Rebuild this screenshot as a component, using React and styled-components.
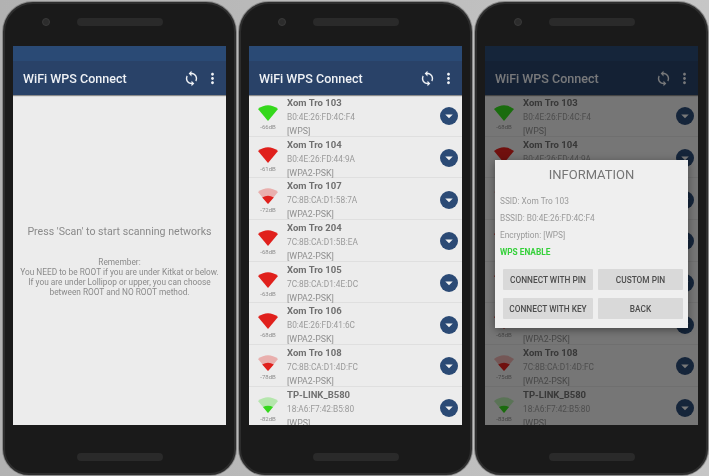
import React from "react";
import styled, { createGlobalStyle } from "styled-components";
import { MdSync, MdMoreVert, MdArrowDropDown } from "react-icons/md";

const networks = [
  { name: "Xom Tro 103", mac: "B0:4E:26:FD:4C:F4", type: "[WPS]", db: "-66dB", dim: "-68dB", color: "#35d81c", level: 4 },
  { name: "Xom Tro 104", mac: "B0:4E:26:FD:44:9A", type: "[WPA2-PSK]", db: "-61dB", dim: "-61dB", color: "#e0201c", level: 4 },
  { name: "Xom Tro 107", mac: "7C:8B:CA:D1:58:7A", type: "[WPA2-PSK]", db: "-72dB", dim: "-72dB", color: "#e0201c", level: 2 },
  { name: "Xom Tro 204", mac: "7C:8B:CA:D1:5B:EA", type: "[WPA2-PSK]", db: "-68dB", dim: "-68dB", color: "#e0201c", level: 4 },
  { name: "Xom Tro 105", mac: "7C:8B:CA:D1:4E:DC", type: "[WPA2-PSK]", db: "-63dB", dim: "-63dB", color: "#e0201c", level: 4 },
  { name: "Xom Tro 106", mac: "B0:4E:26:FD:41:6C", type: "[WPA2-PSK]", db: "-68dB", dim: "-68dB", color: "#e0201c", level: 4 },
  { name: "Xom Tro 108", mac: "7C:8B:CA:D1:4D:FC", type: "[WPA2-PSK]", db: "-78dB", dim: "-75dB", color: "#e0201c", level: 2 },
  { name: "TP-LINK_B580", mac: "18:A6:F7:42:B5:80", type: "[WPS]", db: "-82dB", dim: "-83dB", color: "#35d81c", level: 1 },
];

const Signal = ({ color, level }) => (
  <svg width="20" height="17" viewBox="0 0 20 17">
    {level < 4 && <path d="M0 5 Q10 -2.5 20 5 L10 17 Z" fill={color} opacity="0.3" />}
    {level === 4 && <path d="M0 5 Q10 -2.5 20 5 L10 17 Z" fill={color} />}
    {level === 2 && <path d="M4.2 10.5 Q10 7 15.8 10.5 L10 17 Z" fill={color} />}
    {level === 1 && <path d="M5 11 Q10 8.5 15 11 L10 17 Z" fill={color} />}
  </svg>
);

const Toolbar = () => (
  <Header>
    <StatusBar />
    <ActionBar>
      <AppTitle>WiFi WPS Connect</AppTitle>
      <MdSync size={17} />
      <MdMoreVert size={17} />
    </ActionBar>
  </Header>
);

const NetworkList = ({ dimmed }) => (
  <List>
    {networks.map((n) => (
      <Row key={n.name}>
        <SignalCell>
          <Signal color={n.color} level={n.level} />
          <Db>{dimmed ? n.dim : n.db}</Db>
        </SignalCell>
        <Info>
          <Name>{n.name}</Name>
          <Mac>{n.mac}</Mac>
          <Security>{n.type}</Security>
        </Info>
        <Expand>
          <MdArrowDropDown size={18} />
        </Expand>
      </Row>
    ))}
  </List>
);

const Phone = ({ children }) => (
  <Body>
    <TopBezel>
      <Camera />
      <Speaker />
    </TopBezel>
    <Screen>{children}</Screen>
    <BottomBezel>
      <Speaker />
    </BottomBezel>
  </Body>
);

const App = () => (
  <Page>
    <GlobalStyle />
    <Phone>
      <Toolbar />
      <Empty>
        <Hint>Press 'Scan' to start scanning networks</Hint>
        <Remember>
          Remember:
          <br />
          You NEED to be ROOT if you are under Kitkat or below.
          <br />
          If you are under Lollipop or upper, you can choose
          <br />
          between ROOT and NO ROOT method.
        </Remember>
      </Empty>
    </Phone>
    <Phone>
      <Toolbar />
      <NetworkList />
    </Phone>
    <Phone>
      <Toolbar />
      <NetworkList dimmed />
      <Overlay>
        <Dialog>
          <DialogTitle>INFORMATION</DialogTitle>
          <DialogLine>SSID: Xom Tro 103</DialogLine>
          <DialogLine>BSSID: B0:4E:26:FD:4C:F4</DialogLine>
          <DialogLine>Encryption: [WPS]</DialogLine>
          <DialogLine $ok>WPS ENABLE</DialogLine>
          <Buttons>
            <DialogButton>CONNECT WITH PIN</DialogButton>
            <DialogButton>CUSTOM PIN</DialogButton>
            <DialogButton>CONNECT WITH KEY</DialogButton>
            <DialogButton>BACK</DialogButton>
          </Buttons>
        </Dialog>
      </Overlay>
    </Phone>
  </Page>
);

const GlobalStyle = createGlobalStyle`
  html, body {
    margin: 0;
    padding: 0;
    background: #b9b9b9;
    font-family: Roboto, "Liberation Sans", sans-serif;
    overflow: hidden;
  }
`;

const Page = styled.div`
  display: flex;
  gap: 3px;
  width: 709px;
  height: 476px;
  box-sizing: border-box;
  padding: 2px 1px 1px 3px;
  background: linear-gradient(90deg, #b2b2b2, #c6c6c6);
  filter: blur(0.5px);
`;

const Body = styled.div`
  width: 233px;
  height: 473px;
  box-sizing: border-box;
  border: 2px solid #2d2d2d;
  border-radius: 30px 30px 26px 26px;
  background: #1a1a1a;
  box-shadow: 0 0 0 1px #8a8a8a;
  display: flex;
  flex-direction: column;
  padding: 0 8px;
`;

const TopBezel = styled.div`
  height: 42px;
  flex: none;
  display: flex;
  align-items: flex-start;
  padding: 14px 0 0 29px;
  box-sizing: border-box;
  gap: 27px;
`;

const BottomBezel = styled.div`
  flex: 1;
  display: flex;
  justify-content: center;
  align-items: flex-start;
  padding-top: 28px;
`;

const Camera = styled.div`
  width: 8px;
  height: 8px;
  margin-top: 0;
  border-radius: 50%;
  background: #2c2c2c;
  border: 1px solid #3a3a3a;
  box-sizing: border-box;
`;

const Speaker = styled.div`
  width: 86px;
  height: 8px;
  border-radius: 4px;
  background: #2a2a2a;
`;

const Screen = styled.div`
  position: relative;
  height: 379px;
  flex: none;
  background: #ececec;
  overflow: hidden;
  display: flex;
  flex-direction: column;
`;

const Header = styled.div`
  flex: none;
  color: #eef1f5;
  box-shadow: 0 1px 1px #8b8b8b;
  z-index: 1;
`;

const StatusBar = styled.div`
  height: 15px;
  background: #2a4a75;
`;

const ActionBar = styled.div`
  height: 34px;
  box-sizing: border-box;
  display: flex;
  align-items: center;
  padding: 0 5px 0 10px;
  gap: 4px;
  background: #294268;
`;

const AppTitle = styled.div`
  flex: 1;
  font-size: 12.5px;
  font-weight: 500;
`;

const Empty = styled.div`
  flex: 1;
  display: flex;
  flex-direction: column;
  align-items: center;
  justify-content: center;
  gap: 18px;
  padding-top: 1px;
  text-align: center;
  color: #8a8a8a;
`;

const Hint = styled.div`
  font-size: 10.6px;
  line-height: 14px;
`;

const Remember = styled.div`
  font-size: 8.3px;
  line-height: 10px;
`;

const List = styled.div`
  flex: 1;
  overflow: hidden;
`;

const Row = styled.div`
  height: 41.7px;
  box-sizing: border-box;
  display: flex;
  align-items: center;
  border-bottom: 1px solid #dfdfdf;
`;

const SignalCell = styled.div`
  width: 38px;
  flex: none;
  display: flex;
  flex-direction: column;
  align-items: center;
  padding-top: 4px;
`;

const Db = styled.div`
  font-size: 6px;
  line-height: 8px;
  margin-top: 2px;
  color: #8d8d8d;
`;

const Info = styled.div`
  flex: 1;
  min-width: 0;
  align-self: flex-start;
`;

const Name = styled.div`
  font-size: 9.5px;
  font-weight: 700;
  line-height: 15px;
  color: #707070;
`;

const Mac = styled.div`
  font-size: 8.3px;
  line-height: 14px;
  color: #9a9a9a;
`;

const Security = styled.div`
  font-size: 8.8px;
  line-height: 15px;
  color: #8f8f8f;
`;

const Expand = styled.div`
  width: 18px;
  height: 18px;
  flex: none;
  margin: 2px 4px 0 0;
  border-radius: 50%;
  background: #2b4a75;
  color: #f2f2f2;
  display: flex;
  align-items: center;
  justify-content: center;
`;

const Overlay = styled.div`
  position: absolute;
  inset: 0;
  z-index: 2;
  background: rgba(0, 0, 0, 0.5);
  display: flex;
  align-items: flex-start;
  justify-content: center;
  padding-top: 114px;
`;

const Dialog = styled.div`
  width: 193px;
  height: 168px;
  box-sizing: border-box;
  padding: 6px 5px 0 5px;
  background: #efefef;
  box-shadow: 0 2px 8px rgba(0, 0, 0, 0.4);
`;

const DialogTitle = styled.div`
  font-size: 13px;
  font-weight: 400;
  line-height: 18px;
  text-align: center;
  color: #757575;
  margin-bottom: 9px;
`;

const DialogLine = styled.div`
  font-size: 8.3px;
  line-height: 17px;
  color: ${(p) => (p.$ok ? "#35d03a" : "#9a9a9a")};
  font-weight: ${(p) => (p.$ok ? 700 : 400)};
`;

const Buttons = styled.div`
  display: grid;
  grid-template-columns: 90px 85px;
  grid-auto-rows: 21px;
  gap: 8px 5px;
  margin: 8px 0 0 3px;
`;

const DialogButton = styled.div`
  display: flex;
  align-items: center;
  justify-content: center;
  background: #d9d9d9;
  border-radius: 1px;
  font-size: 8.3px;
  font-weight: 500;
  color: #4c4c4c;
`;

export default App;
